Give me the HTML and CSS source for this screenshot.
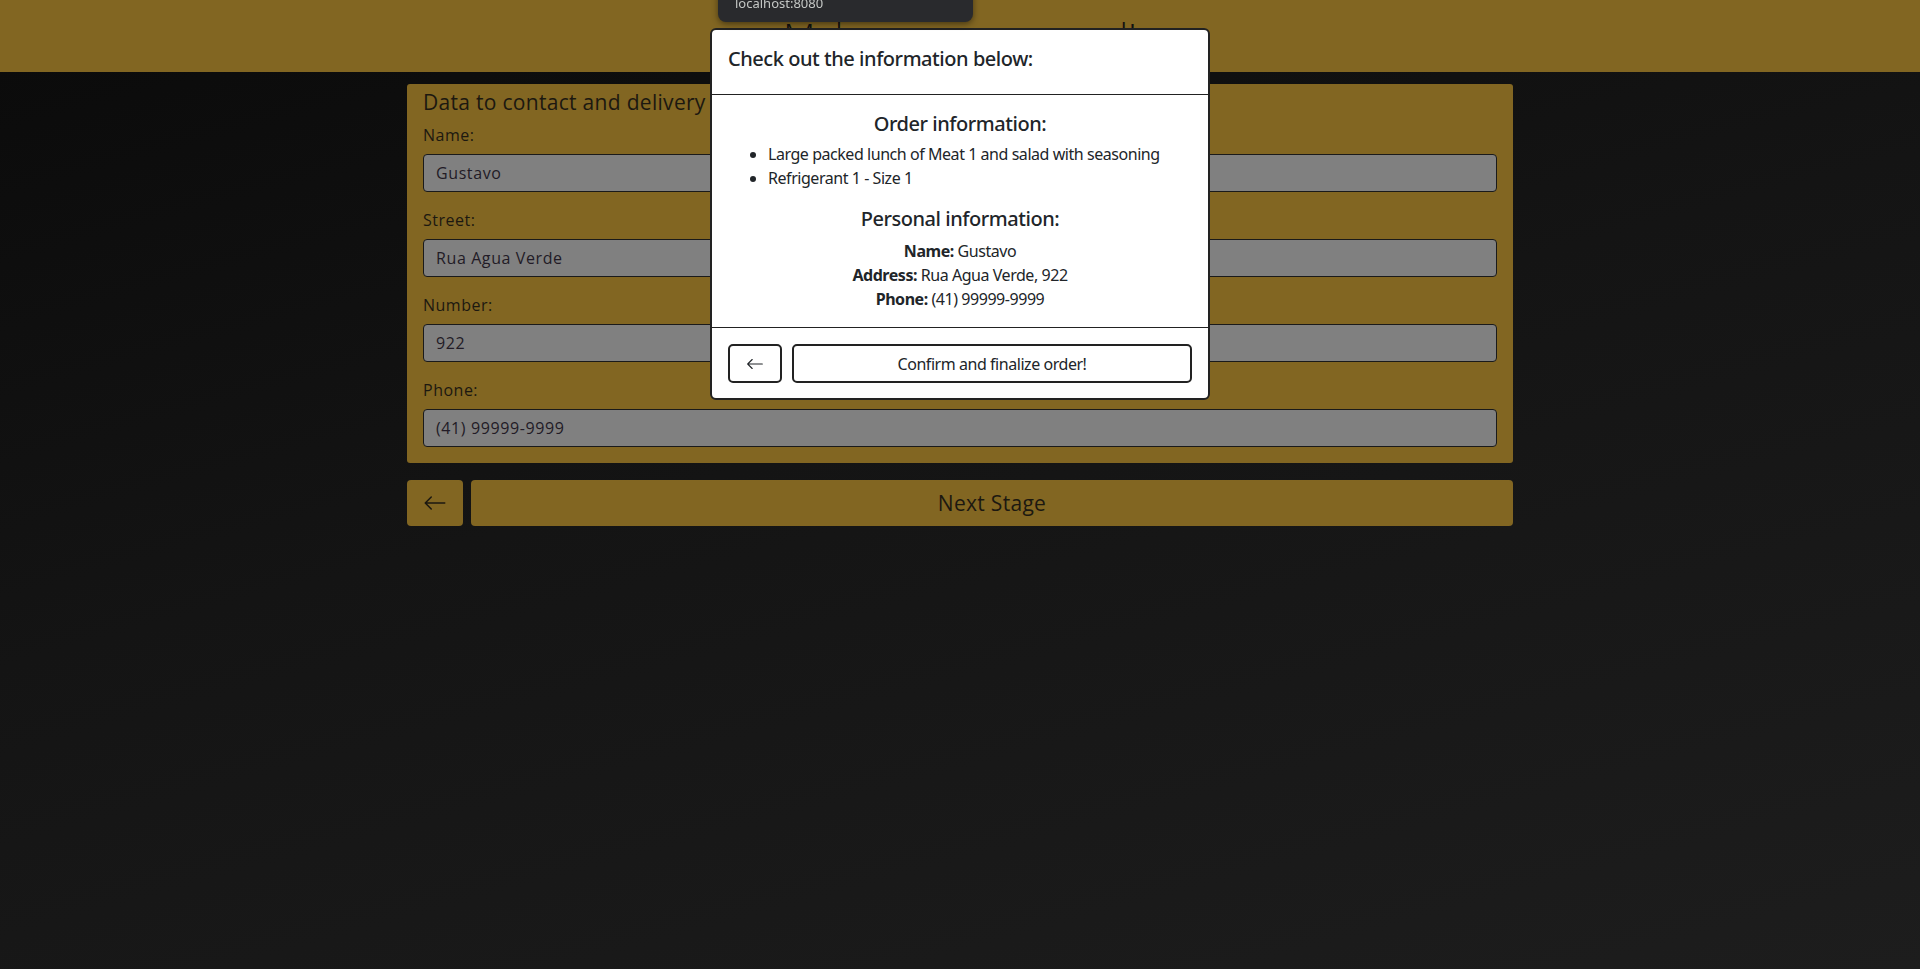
FILE: index.html
```html
<!DOCTYPE html>
<html lang="en">
<head>
<meta charset="utf-8">
<title>Order - Data to contact and delivery</title>
<link rel="stylesheet" href="styles.css">
</head>
<body>
<div class="url-tip">localhost:8080</div>

<header class="topbar">
  <h1 class="brand">Make your own meal!</h1>
</header>

<main class="page">
  <form class="card">
    <h2 class="card-title">Data to contact and delivery</h2>
    <div class="field">
      <label for="f-name">Name:</label>
      <input id="f-name" type="text" value="Gustavo">
    </div>
    <div class="field">
      <label for="f-street">Street:</label>
      <input id="f-street" type="text" value="Rua Agua Verde">
    </div>
    <div class="field">
      <label for="f-number">Number:</label>
      <input id="f-number" type="text" value="922">
    </div>
    <div class="field">
      <label for="f-phone">Phone:</label>
      <input id="f-phone" type="text" value="(41) 99999-9999">
    </div>
  </form>
  <div class="actions">
    <button class="btn-back" type="button" aria-label="Back">
      <svg class="arrow-lg" viewBox="0 0 16 16" fill="currentColor"><path fill-rule="evenodd" d="M15 8a.5.5 0 0 0-.5-.5H2.707l3.147-3.146a.5.5 0 1 0-.708-.708l-4 4a.5.5 0 0 0 0 .708l4 4a.5.5 0 0 0 .708-.708L2.707 8.5H14.5A.5.5 0 0 0 15 8z"/></svg>
    </button>
    <button class="btn-next" type="button">Next Stage</button>
  </div>
</main>

<div class="modal-layer">
  <div class="modal">
    <div class="modal-header">
      <h5 class="modal-title">Check out the information below:</h5>
    </div>
    <div class="modal-body">
      <h5 class="section-title">Order information:</h5>
      <ul class="order-list">
        <li>Large packed lunch of Meat 1 and salad with seasoning</li>
        <li>Refrigerant 1 - Size 1</li>
      </ul>
      <h5 class="section-title second">Personal information:</h5>
      <div class="info">
        <p><strong>Name:</strong> Gustavo</p>
        <p><strong>Address:</strong> Rua Agua Verde, 922</p>
        <p><strong>Phone:</strong> (41) 99999-9999</p>
      </div>
    </div>
    <div class="modal-footer">
      <button class="m-back" type="button" aria-label="Back">
        <svg class="arrow-sm" viewBox="0 0 16 16" fill="currentColor"><path fill-rule="evenodd" d="M15 8a.5.5 0 0 0-.5-.5H2.707l3.147-3.146a.5.5 0 1 0-.708-.708l-4 4a.5.5 0 0 0 0 .708l4 4a.5.5 0 0 0 .708-.708L2.707 8.5H14.5A.5.5 0 0 0 15 8z"/></svg>
      </button>
      <button class="m-confirm" type="button">Confirm and finalize order!</button>
    </div>
  </div>
</div>
</body>
</html>
```

FILE: styles.css
```css
* { box-sizing: border-box; }

html, body {
  margin: 0;
  height: 100%;
}

body {
  min-height: 100vh;
  background: linear-gradient(165deg, #0a0a0a 0%, #141414 45%, #1d1d1d 100%);
  font-family: "Open Sans", sans-serif;
}

/* browser url tooltip */
.url-tip {
  position: absolute;
  top: -14px;
  left: 718px;
  width: 255px;
  height: 36px;
  padding: 9px 17px 0;
  background: #292a2d;
  border-radius: 8px;
  box-shadow: 0 2px 6px rgba(0, 0, 0, 0.45);
  color: #c4c7c5;
  font: 400 13px/16px "Noto Sans", sans-serif;
  z-index: 20;
}

/* header */
.topbar {
  height: 72px;
  background: #826622;
  display: flex;
  justify-content: center;
  align-items: center;
}

.brand {
  margin: 0;
  font: 300 37px/72px "Open Sans", sans-serif;
  color: #111;
}

/* form */
.page {
  width: 1106px;
  margin: 12px auto 0;
}

.card {
  background: #826622;
  border-radius: 3px;
  padding: 5px 16px 16px;
  display: flex;
  flex-direction: column;
  letter-spacing: 0.5px;
}

.card-title {
  margin: 0 0 8px;
  font: 400 21px/26px "Open Sans", sans-serif;
  letter-spacing: 0.3px;
  color: #1c1810;
}

.field {
  display: flex;
  flex-direction: column;
}

.field + .field { margin-top: 16px; }

.field label {
  font-size: 16px;
  line-height: 24px;
  margin-bottom: 7px;
  color: #1c1810;
}

.field input {
  height: 38px;
  border: 1px solid #1a1a1a;
  border-radius: 4px;
  background: #808080;
  padding: 0 12px;
  font: 400 16px "Open Sans", sans-serif;
  letter-spacing: 0.6px;
  color: #221b26;
  outline: none;
}

.actions {
  display: flex;
  gap: 8px;
  margin-top: 17px;
}

.btn-back,
.btn-next {
  height: 46px;
  border: none;
  border-radius: 4px;
  background: #826622;
  color: #1c1810;
  padding: 0;
}

.btn-back {
  width: 56px;
  display: flex;
  align-items: center;
  justify-content: center;
}

.arrow-lg { width: 24px; height: 24px; }

.btn-next {
  flex: 1;
  font: 400 21px "Open Sans", sans-serif;
  letter-spacing: 0.3px;
}

/* modal */
.modal-layer {
  position: fixed;
  inset: 0;
  display: flex;
  justify-content: center;
  align-items: flex-start;
  padding-top: 28px;
  z-index: 10;
}

.modal {
  width: 500px;
  background: #fff;
  border: 2px solid #222;
  border-radius: 6px;
  font-family: "Noto Sans", sans-serif;
  letter-spacing: -0.45px;
  color: #212529;
}

.modal-header {
  padding: 14px 16px 20px;
  border-bottom: 1px solid #222;
}

.modal-title {
  margin: 0;
  font: 500 20px/30px "Noto Sans", sans-serif;
}

.modal-body {
  padding: 16px;
  font-size: 16px;
  line-height: 24px;
}

.section-title {
  margin: 0 0 5px;
  text-align: center;
  font: 500 20px/26px "Noto Sans", sans-serif;
}

.section-title.second { margin-bottom: 7px; }

.order-list {
  margin: 0 0 16px;
  padding-left: 40px;
}

.info p {
  margin: 0;
  text-align: center;
}

.info strong { font-weight: 700; }

.modal-footer {
  border-top: 1px solid #222;
  padding: 16px 16px 15px;
  display: flex;
  gap: 10px;
}

.m-back,
.m-confirm {
  height: 39px;
  border: 2px solid #222;
  border-radius: 5px;
  background: #fff;
  color: #212529;
  padding: 0;
}

.m-back {
  width: 54px;
  display: flex;
  align-items: center;
  justify-content: center;
}

.arrow-sm { width: 18px; height: 18px; }

.m-confirm {
  flex: 1;
  font: 400 16px "Noto Sans", sans-serif;
  letter-spacing: -0.45px;
}
```
